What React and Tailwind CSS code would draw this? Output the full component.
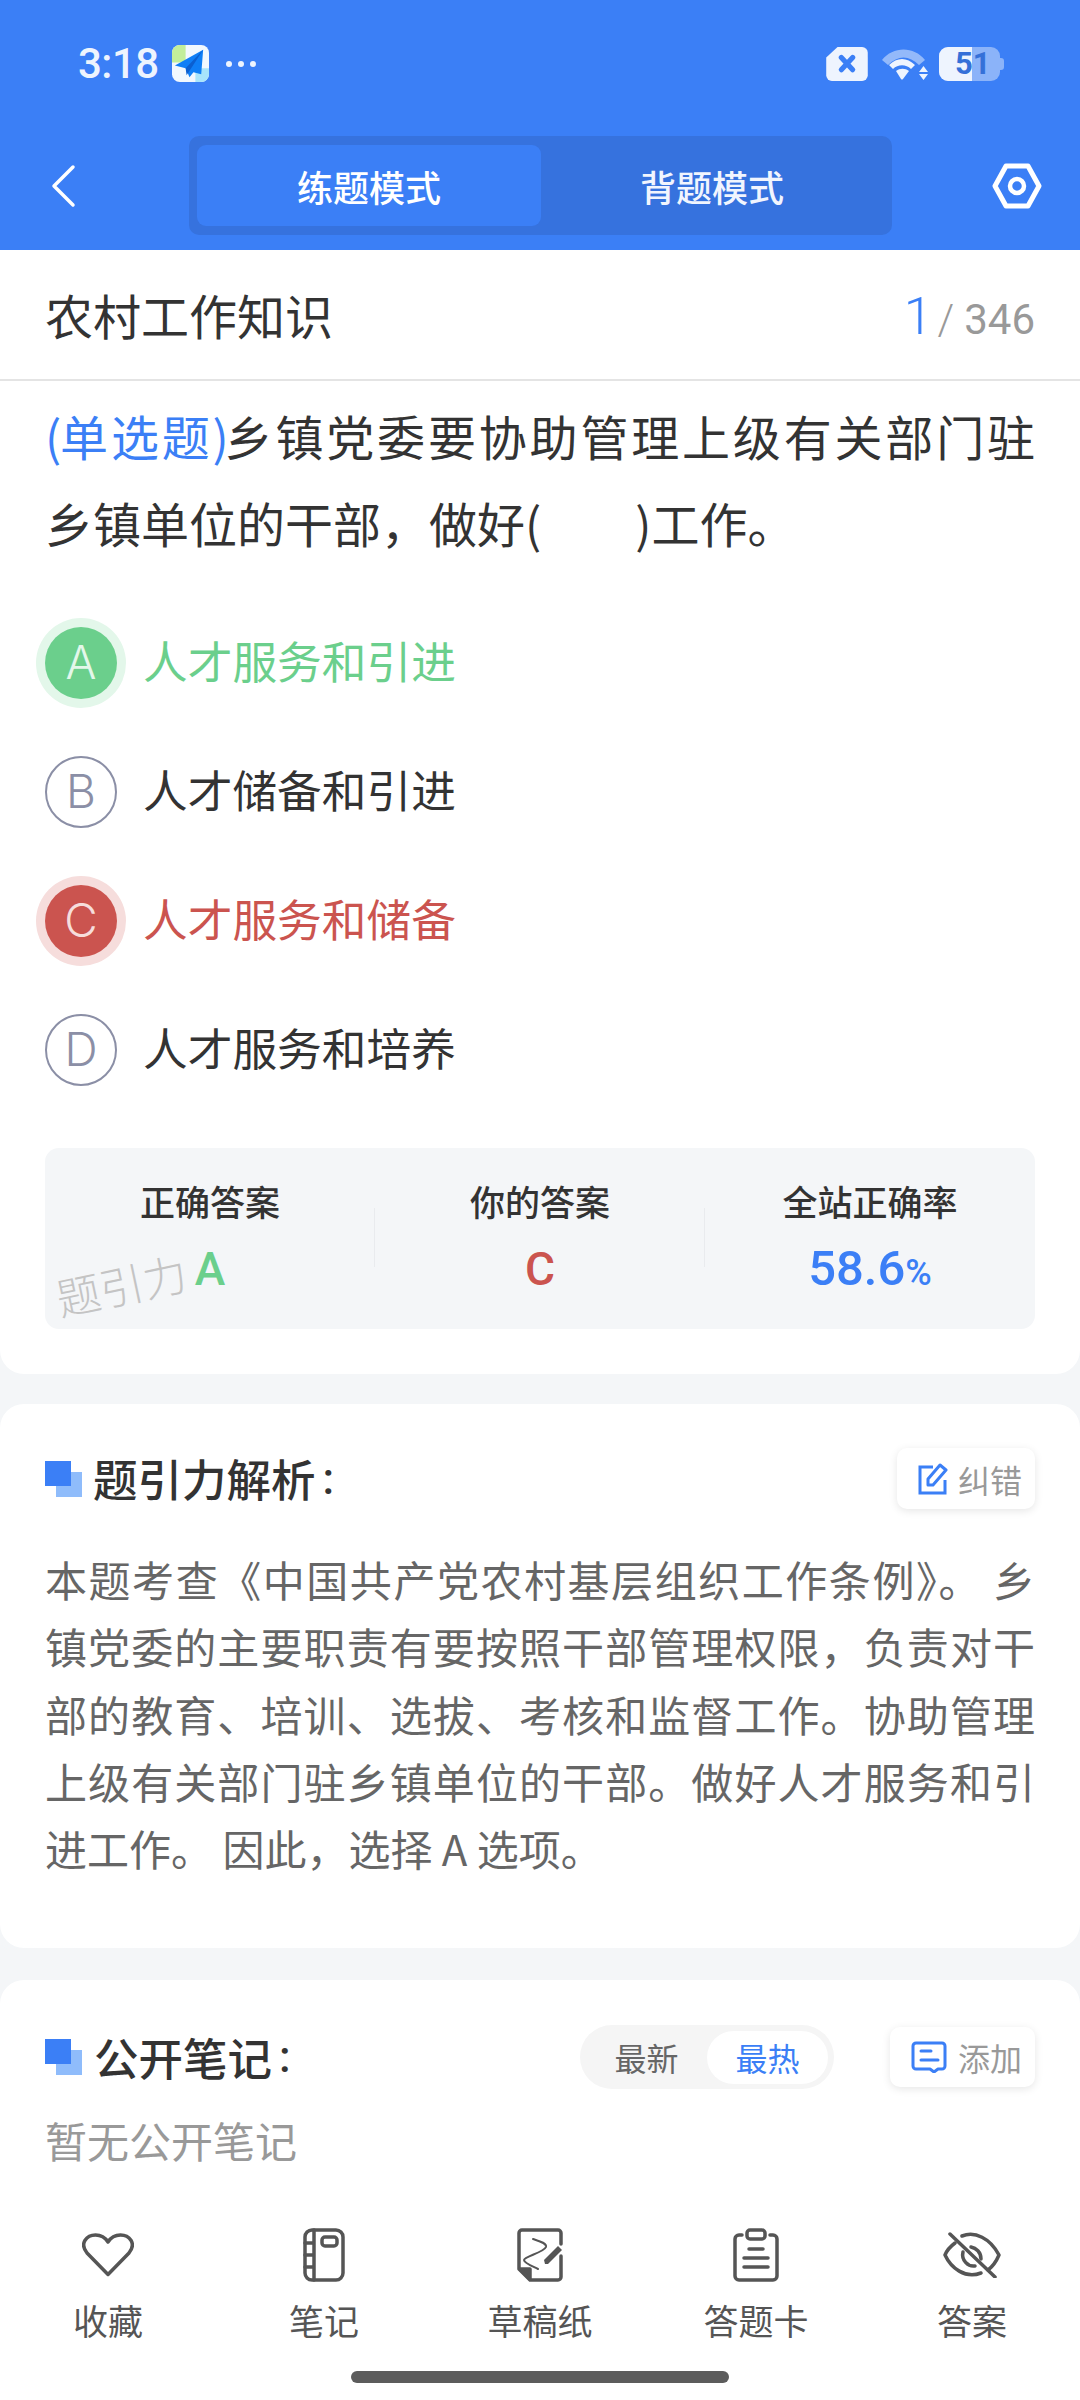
import React from "react";

const F = { fontFamily: '"Noto Sans CJK SC", "Roboto", sans-serif' };
const L = { fontFamily: '"Inter", "Noto Sans CJK SC", sans-serif' };
const R = { fontFamily: '"Roboto", sans-serif' };

function Blocks() {
  return (
    <span className="relative block w-[37px] h-[36px] shrink-0">
      <span className="absolute left-[11px] top-[11px] w-[26px] h-[25px] bg-[#8fbcfb]" />
      <span className="absolute left-0 top-0 w-[26px] h-[25px] bg-[#3b7ff6]" />
    </span>
  );
}

function Option({ l, t, kind }) {
  const circle =
    kind === "ok"
      ? "bg-[#6bcf8c] text-[#e3f7ea] ring-[9px] ring-[#e3f7ea]"
      : kind === "bad"
      ? "bg-[#cb544f] text-[#f6dddc] ring-[9px] ring-[#f6dddc]"
      : "border-2 border-[#8b8fa6] text-[#8b8fa6]";
  const text = kind === "ok" ? "text-[#6bcf8c]" : kind === "bad" ? "text-[#cb544f]" : "text-[#333333]";
  return (
    <div className="flex items-center h-[129px]">
      <div className={`w-[72px] h-[72px] rounded-full flex items-center justify-center text-[46px] font-light shrink-0 ${circle}`} style={L}>
        {l}
      </div>
      <div className={`ml-[26px] text-[44.7px] leading-[60px] pb-[6px] ${text}`}>{t}</div>
    </div>
  );
}

function Stat({ title, children, border }) {
  return (
    <div className="flex-1 flex flex-col items-center relative pt-[30px]">
      <div className="text-[35px] font-medium text-[#333333] leading-[46px]">{title}</div>
      <div className="mt-[15px] h-[60px] flex items-center">{children}</div>
      {border && <div className="absolute right-0 top-[60px] h-[59px] w-px bg-[#e9ebee]" />}
    </div>
  );
}

function NavItem({ icon, label }) {
  return (
    <div className="flex-1 flex flex-col items-center">
      <div className="h-[60px] flex items-center justify-center">{icon}</div>
      <div className="mt-[12px] text-[35px] leading-[46px] text-[#555555]">{label}</div>
    </div>
  );
}

const strokeIcon = { fill: "none", stroke: "#555555", strokeWidth: 3.5, strokeLinecap: "round", strokeLinejoin: "round" };

export default function App() {
  return (
    <div className="w-[1080px] h-[2400px] bg-[#f4f6f8] overflow-hidden flex flex-col" style={F}>
      <div className="bg-[#3b7ff6] h-[250px] shrink-0 flex flex-col">
        <div className="h-[136px] shrink-0 flex items-center justify-between pl-[78px] pr-[76px] pb-[9px]">
          <div className="flex items-center">
            <span className="text-[42px] font-medium text-[#eef4fe] tracking-[-0.5px]" style={R}>3:18</span>
            <svg width="37" height="37" viewBox="0 0 38 38" className="ml-[13px]">
              <rect width="38" height="38" rx="8" fill="#f2f8fe" />
              <path d="M0 8a8 8 0 0 1 8-8h6v18H0z" fill="#c2ee9a" />
              <path d="M24 24h14v6a8 8 0 0 1-8 8h-6z" fill="#a8e4fb" />
              <path d="M32 5 3 21l11 3 4 9 4-5 8 2z" fill="#0f7ef6" />
              <path d="M32 5 14 24l1 7z" fill="#0b5fd0" />
            </svg>
            <span className="ml-[17px] flex gap-[6px]">
              <i className="block w-[6px] h-[6px] rounded-full bg-[#eef4fe]" />
              <i className="block w-[6px] h-[6px] rounded-full bg-[#eef4fe]" />
              <i className="block w-[6px] h-[6px] rounded-full bg-[#eef4fe]" />
            </span>
          </div>
          <div className="flex items-center">
            <svg width="42" height="34" viewBox="0 0 44 36">
              <path d="M12 0h26a6 6 0 0 1 6 6v24a6 6 0 0 1-6 6H6a6 6 0 0 1-6-6V11z" fill="#eef4fe" />
              <path d="M16 11l12 13M28 11 16 24" stroke="#3b7ff6" strokeWidth="5.5" strokeLinecap="round" />
            </svg>
            <svg width="47" height="33" viewBox="0 0 47 33" className="ml-[13px]">
              <path d="M1 13C12 -1 33 -1 44 13l-6 5C28 8 17 8 7 18z" fill="#93b9fa" />
              <path d="M8 18c8-8 18-8 26 0l-4 4c-5-5-13-5-18 0z" fill="#eef4fe" />
              <path d="M15 24c4-3 9-3 13 0l-6 8q-1 1-2 0z" fill="#eef4fe" />
              <path d="M38 25l4.500-6 4.500 6zM38 27h9l-4.500 6z" fill="#eef4fe" />
            </svg>
            <div className="relative ml-[11px] w-[61px] h-[34px] rounded-[9px] bg-[#8bb3f9] mr-[4px]">
              <div className="absolute left-0 top-0 h-full w-[33px] rounded-l-[9px] bg-[#eef4fe]" />
              <div className="absolute right-[-4px] top-[11px] w-[4px] h-[12px] rounded-r-[3px] bg-[#8bb3f9]" />
              <div className="absolute left-[16px] top-0 h-full flex items-center text-[31px] font-bold text-[#3570d8] leading-none" style={R}>51</div>
            </div>
          </div>
        </div>
        <div className="flex items-center h-[99px] pl-[50px] pr-[38px]">
          <svg width="26" height="44" viewBox="0 0 26 44">
            <path d="M23 3 4 22l19 19" fill="none" stroke="#ffffff" strokeWidth="3.5" strokeLinecap="round" strokeLinejoin="round" />
          </svg>
          <div className="ml-[113px] w-[703px] h-[99px] rounded-[10px] bg-[#3672de] py-[9px] pl-[8px] pr-[9px] flex text-[36px] font-medium text-white">
            <div className="w-[344px] h-[81px] rounded-[9px] bg-[#3b7ff6] flex items-center justify-center">练题模式</div>
            <div className="flex-1 flex items-center justify-center text-[#f1f5fe]">背题模式</div>
          </div>
          <svg width="50" height="46" viewBox="0 0 50 46" className="ml-auto">
            <path d="M14 3h22l11 20-11 20H14L3 23z" fill="none" stroke="#ffffff" strokeWidth="5" strokeLinejoin="round" />
            <circle cx="25" cy="23" r="7" fill="none" stroke="#ffffff" strokeWidth="4.5" />
          </svg>
        </div>
      </div>

      <div className="bg-white rounded-b-[24px] h-[1124px] shrink-0">
        <div className="h-[131px] border-b-2 border-[#e4e4e4] flex items-center justify-between px-[45px] pb-[2px]">
          <div className="text-[48px] text-[#333333]">农村工作知识</div>
          <div className="flex items-baseline pt-[6px]" style={R}>
            <span className="text-[52px] font-light text-[#3b7ff6]">1</span>
            <span className="text-[42px] font-light text-[#999999] ml-[5px]">/</span>
            <span className="text-[42px] text-[#999999] ml-[10px]">346</span>
          </div>
        </div>
        <div className="px-[45px] pt-[11px] text-[48px] leading-[87px] text-[#333333]">
          <div className="text-justify [text-align-last:justify]">
            <span className="text-[#3b7ff6]"><span className="tracking-[-6px]">(</span><span className="ml-[2px]">单选题</span><span className="tracking-[-7px]">)</span></span>乡镇党委要协助管理上级有关部门驻
          </div>
          <div>乡镇单位的干部，做好(<span className="inline-block w-[94px]" />)工作。</div>
        </div>
        <div className="px-[45px] mt-[32px]">
          <Option l="A" t="人才服务和引进" kind="ok" />
          <Option l="B" t="人才储备和引进" />
          <Option l="C" t="人才服务和储备" kind="bad" />
          <Option l="D" t="人才服务和培养" />
        </div>
        <div className="relative mx-[45px] mt-[34px] h-[181px] rounded-[14px] bg-[#f4f6f8] flex overflow-hidden">
          <Stat title="正确答案" border>
            <span className="text-[46px] font-medium text-[#6bcf8c]" style={R}>A</span>
          </Stat>
          <Stat title="你的答案" border>
            <span className="text-[46px] font-medium text-[#cb544f]" style={R}>C</span>
          </Stat>
          <Stat title="全站正确率">
            <span className="font-medium text-[#3b7ff6]" style={R}>
              <span className="text-[49px]">58.6</span>
              <span className="text-[36px]">%</span>
            </span>
          </Stat>
          <div className="absolute left-[10px] top-[114px] text-[44px] text-[#c4c4c4] font-light -rotate-[12deg] leading-none">题引力</div>
        </div>
      </div>

      <div className="bg-white rounded-[24px] mt-[30px] h-[544px] shrink-0 px-[45px] pt-[44px]">
        <div className="flex items-center justify-between h-[61px]">
          <div className="flex items-center">
            <Blocks />
            <span className="ml-[11px] text-[44.5px] font-medium text-[#333333]">题引力解析</span>
            <span className="ml-[7px] text-[44px] font-medium text-[#333333]" style={R}>:</span>
          </div>
          <div className="w-[138px] h-[61px] rounded-[10px] bg-white shadow-[0_2px_8px_rgba(0,0,0,0.1)] flex items-center justify-end pr-[13px]">
            <svg width="30" height="33" viewBox="0 0 30 33">
              <path d="M15 5H2v26h25V18" fill="none" stroke="#3b7ff6" strokeWidth="3" />
              <path d="M10 23v-6L22 3l6 5-13 15z" fill="none" stroke="#3b7ff6" strokeWidth="3" strokeLinejoin="round" />
            </svg>
            <span className="ml-[10px] text-[32px] text-[#999999]">纠错</span>
          </div>
        </div>
        <div className="mt-[36px] text-[42px] leading-[67.3px] text-[#666666] text-justify">
          本题考查《中国共产党农村基层组织工作条例》。 乡镇党委的主要职责有要按照干部管理权限，负责对干部的教育、培训、选拔、考核和监督工作。协助管理上级有关部门驻乡镇单位的干部。做好人才服务和引进工作。 因此，选择 A 选项。
        </div>
      </div>

      <div className="bg-white rounded-t-[24px] mt-[32px] flex-1 flex flex-col">
        <div className="px-[45px] pt-[45px]">
          <div className="flex items-center h-[64px]">
            <Blocks />
            <span className="ml-[12px] text-[44.5px] font-medium text-[#333333]">公开笔记</span>
            <span className="ml-[7px] text-[44px] font-medium text-[#333333]" style={R}>:</span>
            <div className="ml-auto w-[254px] h-[64px] rounded-full bg-[#f5f5f5] flex items-center pl-[6px] pr-[6px] text-[32px]">
              <span className="w-[121px] text-center text-[#666666]">最新</span>
              <span className="w-[121px] h-[53px] rounded-full bg-white flex items-center justify-center text-[#3b7ff6]">最热</span>
            </div>
            <div className="ml-[56px] w-[145px] h-[60px] rounded-[10px] bg-white shadow-[0_2px_8px_rgba(0,0,0,0.1)] flex items-center justify-end pr-[13px]">
              <svg width="36" height="32" viewBox="0 0 36 32">
                <path d="M5 2h26a3 3 0 0 1 3 3v20a3 3 0 0 1-3 3h-4l-4 3-4-3H5a3 3 0 0 1-3-3V5a3 3 0 0 1 3-3z" fill="none" stroke="#3b7ff6" strokeWidth="3" strokeLinejoin="round" />
                <path d="M10 10h10M10 19h17" stroke="#3b7ff6" strokeWidth="3" strokeLinecap="round" />
              </svg>
              <span className="ml-[11px] text-[32px] text-[#999999]">添加</span>
            </div>
          </div>
          <div className="mt-[21px] text-[42px] leading-[60px] text-[#999999]">暂无公开笔记</div>
        </div>
        <div className="mt-[55px] flex">
          <NavItem label="收藏" icon={<svg width="52" height="44" viewBox="0 0 52 44" {...strokeIcon}><path d="M26 41.500 5 20C-3 10 5 2 13.500 2 19.500 2 23.500 5 26 9 28.500 5 32.500 2 38.500 2 47 2 55 10 47 20z" /></svg>} />
          <NavItem label="笔记" icon={<svg width="42" height="54" viewBox="0 0 42 54" {...strokeIcon}><rect x="2" y="2" width="38" height="50" rx="7" /><path d="M11 2v50M2 15h9M2 27h9M2 39h9" /><rect x="19" y="9" width="15" height="9" rx="3" /></svg>} />
          <NavItem label="草稿纸" icon={<svg width="46" height="54" viewBox="0 0 46 54" {...strokeIcon}><path d="M44 16V5a3 3 0 0 0-3-3H5a3 3 0 0 0-3 3v36l11 11h28a3 3 0 0 0 3-3V28" /><path d="M3 41h10v10z" fill="#555555" /><path d="M16 11c6 2 14 4 13 8-2 5-22 10-22 13 0 3 8 6 14 9" strokeWidth="2" /><path d="M28 36l-1-4 14-14 4 4-14 14z" fill="#555555" stroke="none" /></svg>} />
          <NavItem label="答题卡" icon={<svg width="46" height="54" viewBox="0 0 46 54" {...strokeIcon}><path d="M9 7H6a4 4 0 0 0-4 4v37a4 4 0 0 0 4 4h34a4 4 0 0 0 4-4V11a4 4 0 0 0-4-4h-3" /><rect x="14" y="2" width="18" height="9" rx="3" /><path d="M16 21h14M11 30h24M11 39h24" /></svg>} />
          <NavItem label="答案" icon={<svg width="58" height="46" viewBox="0 0 58 46" {...strokeIcon}><path d="M19 4C32-1 47 6 56 23c-3 7-7 12-11 15" /><path d="M12 11c-4 3-8 7-10 12 6 13 20 24 36 18" /><path d="M20 20c-2 8 5 15 12 14" /><path d="M28 15c5 1 10 5 10 12" /><path d="M7 2l45 43" /></svg>} />
        </div>
        <div className="mt-[28px] mx-auto w-[378px] h-[12px] rounded-full bg-[#5c5c5c]" />
      </div>
    </div>
  );
}
